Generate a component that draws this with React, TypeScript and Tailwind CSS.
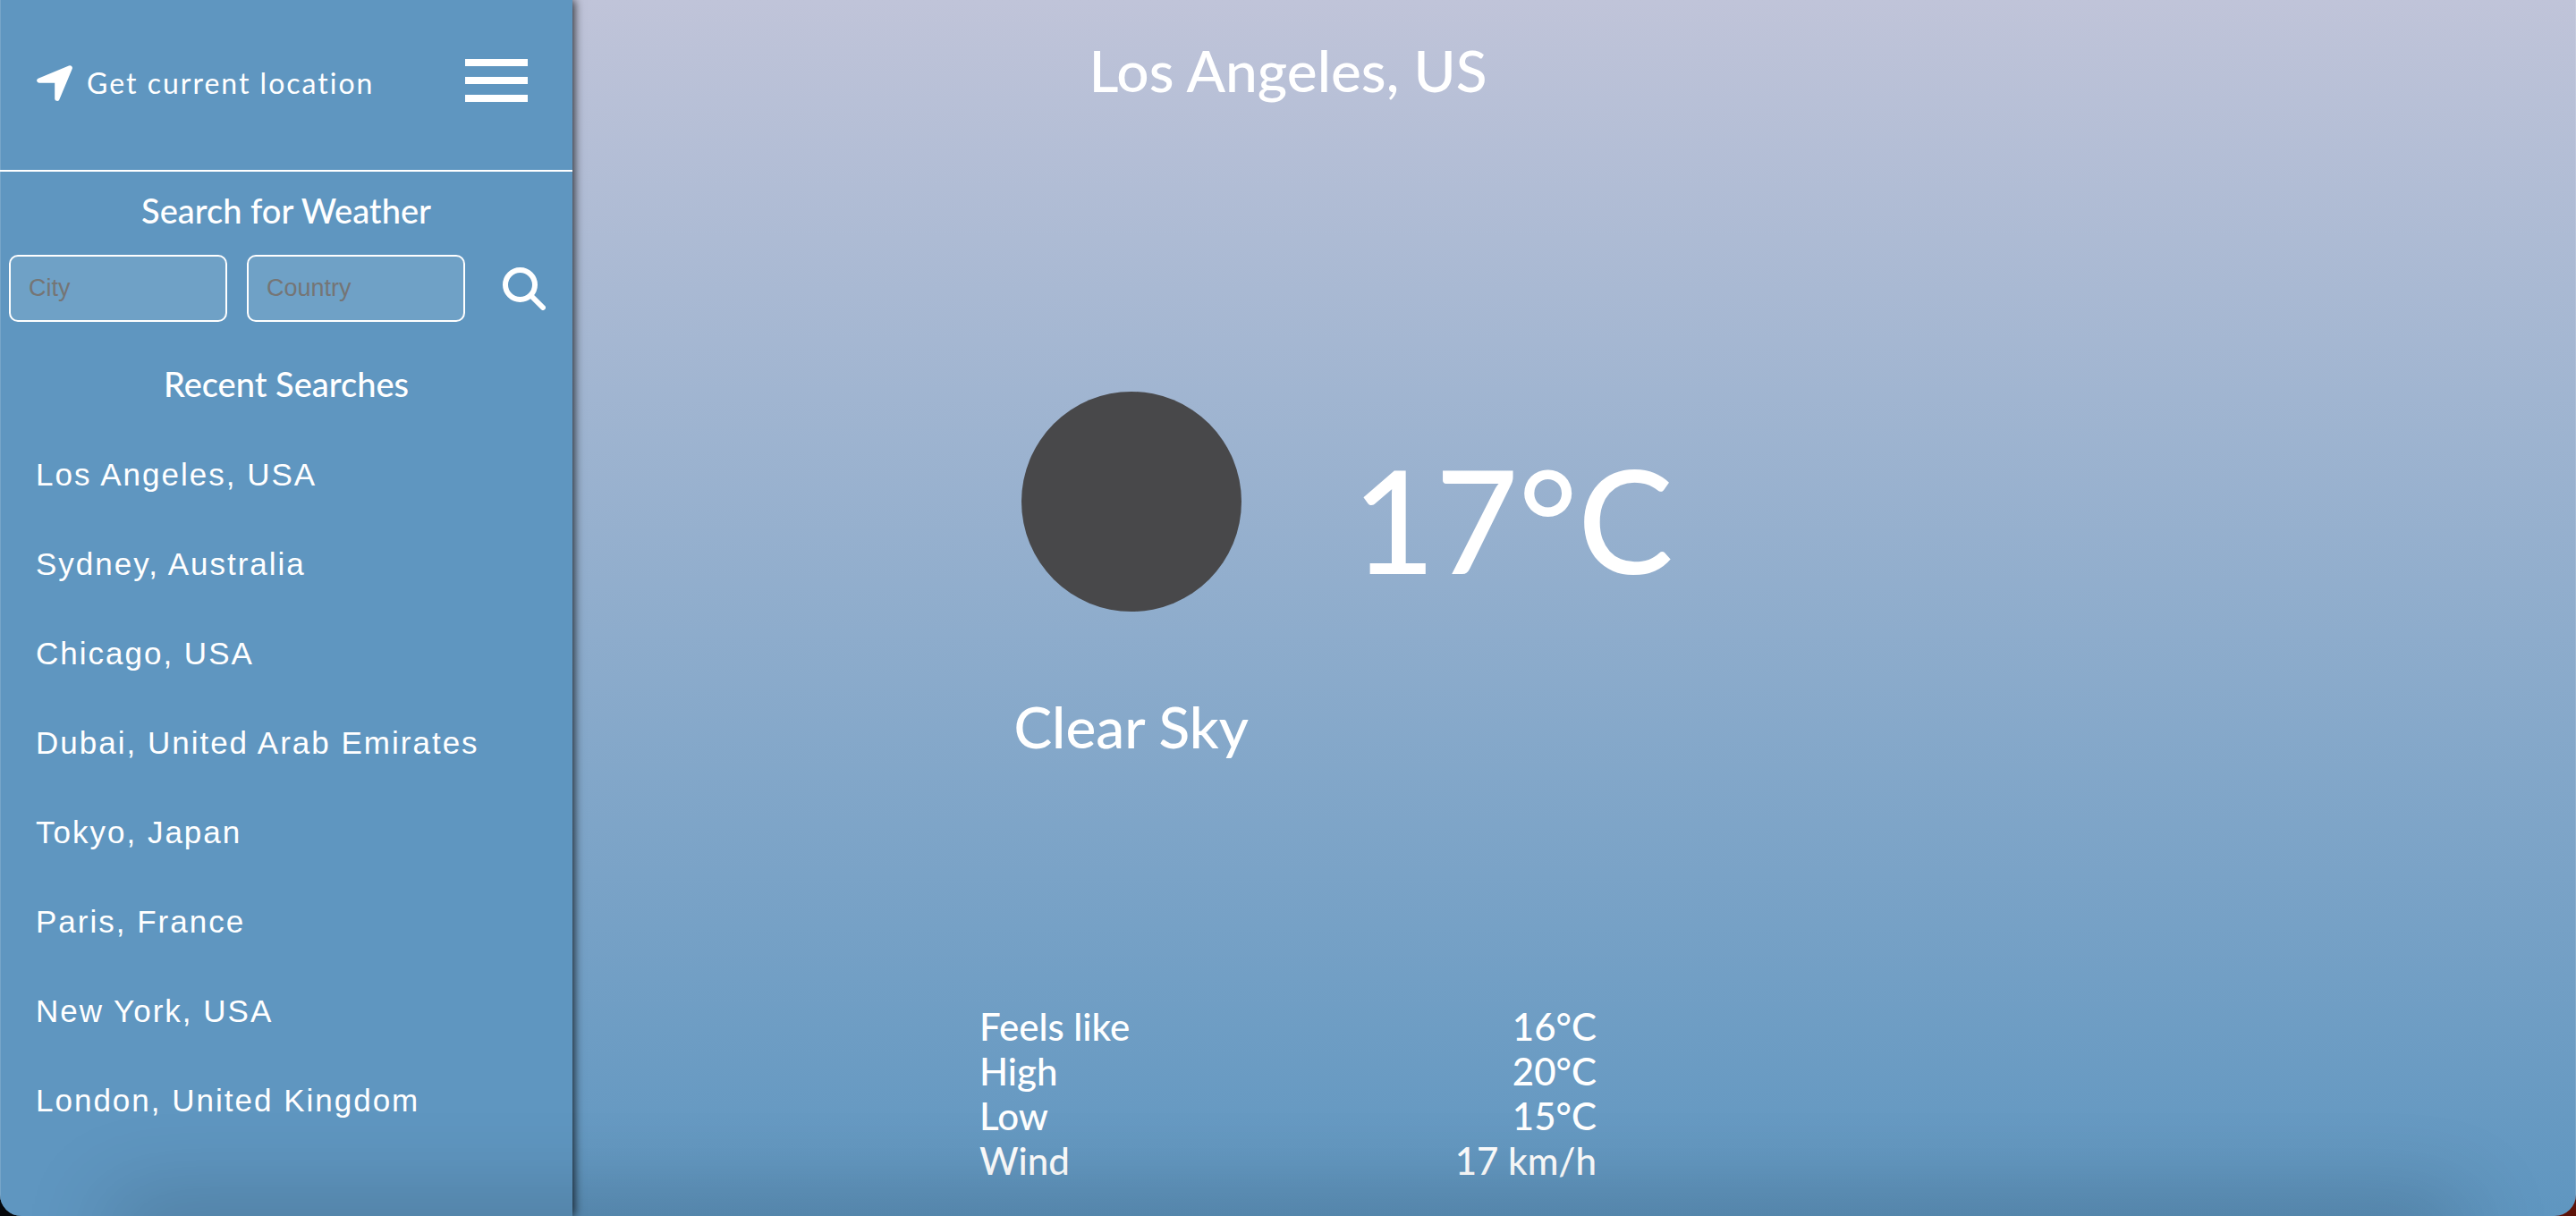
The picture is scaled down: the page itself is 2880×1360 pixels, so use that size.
const recent = [
  "Los Angeles, USA",
  "Sydney, Australia",
  "Chicago, USA",
  "Dubai, United Arab Emirates",
  "Tokyo, Japan",
  "Paris, France",
  "New York, USA",
  "London, United Kingdom",
];

const details = [
  ["Feels like", "16°C"],
  ["High", "20°C"],
  ["Low", "15°C"],
  ["Wind", "17 km/h"],
];

const field =
  "h-[75px] min-w-0 flex-1 rounded-[10px] border-2 border-white bg-white/10 px-5 font-['Liberation_Sans',sans-serif] text-[27px] font-normal text-white placeholder:text-[#757575]";

function LocationArrow() {
  return (
    <svg viewBox="0 0 40 40" className="size-10" fill="currentColor" aria-hidden="true">
      <path d="M36 .4 1.7 14.7A2.6 2.6 0 0 0 2.7 19.7H20.2V37.4A2.7 2.7 0 0 0 25.3 38.4L39.7 4A2.8 2.8 0 0 0 36 .4Z" />
    </svg>
  );
}

function SearchIcon() {
  return (
    <svg viewBox="0 0 48 48" className="size-12" fill="none" stroke="currentColor" strokeWidth="6" strokeLinecap="round" aria-hidden="true">
      <circle cx="19.5" cy="19.5" r="16.5" />
      <path d="M31.5 31.5 45 45" />
    </svg>
  );
}

function Sidebar() {
  return (
    <aside className="relative z-10 w-[640px] shrink-0 bg-[#5f96c0] shadow-[2px_0_10px_rgba(0,0,0,0.8)]">
      <div className="flex h-48 items-start justify-between border-b-2 border-white pt-[66px] pr-[50px] pl-[41px]">
        <button className="flex items-center gap-4 text-[32px] leading-[54px] font-normal tracking-[2px]">
          <LocationArrow />
          Get current location
        </button>
        <button aria-label="Toggle menu" className="flex w-[70px] flex-col gap-3">
          <span className="h-2 bg-white" />
          <span className="h-2 bg-white" />
          <span className="h-2 bg-white" />
        </button>
      </div>
      <h2 className="pt-5 text-center text-[38px] leading-[46px]">Search for Weather</h2>
      <form className="mt-[27px] flex items-center gap-[22px] pl-[10px]" onSubmit={(e) => e.preventDefault()}>
        <input aria-label="City" placeholder="City" className={field} />
        <input aria-label="Country" placeholder="Country" className={field} />
        <button aria-label="Search" className="mr-[30px] ml-5 shrink-0">
          <SearchIcon />
        </button>
      </form>
      <h2 className="pt-[46px] text-center text-[38px] leading-[46px]">Recent Searches</h2>
      <ul className="pt-[29px] font-['Liberation_Sans',sans-serif] text-[35px] leading-[100px] tracking-[2px]">
        {recent.map((city) => (
          <li key={city}>
            <button className="block w-full pl-10 text-left">{city}</button>
          </li>
        ))}
      </ul>
    </aside>
  );
}

export default function App() {
  return (
    <div className="bg-[linear-gradient(to_right,#05080c,#5e1208)]">
      <div className="relative flex min-h-screen overflow-hidden rounded-b-[24px] bg-[linear-gradient(to_bottom,#c0c4d9,#5f96c0)] font-[Lato,sans-serif] font-medium text-white">
        <Sidebar />
        <main className="flex flex-1 flex-col items-center pr-[640px]">
          <h1 className="pt-10 text-[64px] leading-[77px]">Los Angeles, US</h1>
          <section className="mt-[283px] ml-[124px] flex gap-[116px]">
            <div className="flex flex-col items-center">
              <svg viewBox="0 0 248 248" className="mt-[37px] size-[248px]" aria-hidden="true">
                <circle cx="124" cy="124" r="123" fill="#48484a" />
              </svg>
              <p className="mt-[89px] text-[64px] leading-[77px]">Clear Sky</p>
            </div>
            <p className="mt-[84px] text-[160px] leading-[192px]">17°C</p>
          </section>
          <dl className="mt-auto mb-[37px] flex w-[690px] flex-col text-[42px] leading-[50px]">
            {details.map(([name, value]) => (
              <div key={name} className="flex justify-between">
                <dt>{name}</dt>
                <dd>{value}</dd>
              </div>
            ))}
          </dl>
        </main>
        <div className="pointer-events-none absolute inset-x-[140px] -bottom-10 z-20 h-10 shadow-[0_0_100px_15px_rgba(0,0,0,0.22)]" />
        <div className="pointer-events-none absolute inset-0 z-30 border-x border-white/15" />
      </div>
    </div>
  );
}
